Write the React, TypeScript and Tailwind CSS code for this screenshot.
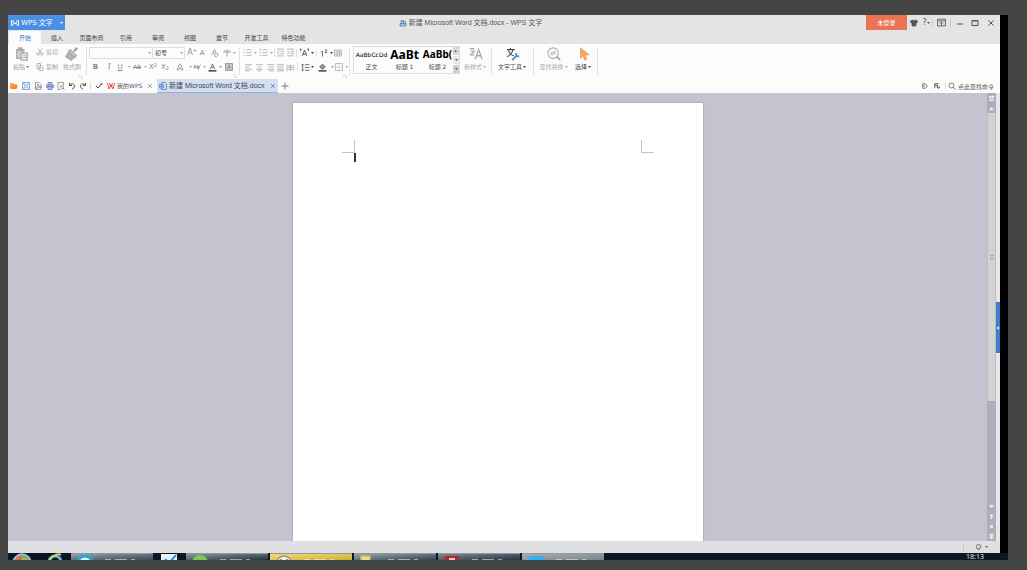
import type { ReactNode } from 'react';
import clsx from 'clsx';

const menus = ['插入', '页面布局', '引用', '审阅', '视图', '章节', '开发工具', '特色功能'];

interface IconProps {
  children: ReactNode;
  className?: string;
}

const Icon = ({ children, className = 'size-2' }: IconProps) => (
  <svg viewBox="0 0 16 16" className={clsx('shrink-0', className)} fill="none" stroke="currentColor" strokeWidth="1.5" aria-hidden="true">
    {children}
  </svg>
);

interface ToolProps {
  label: string;
  children: ReactNode;
  className?: string;
}

const Tool = ({ label, children, className = 'w-2.5' }: ToolProps) => (
  <button type="button" aria-label={label} className={clsx('flex h-2.5 shrink-0 items-center justify-center whitespace-nowrap', className)}>
    {children}
  </button>
);

const Caret = ({ className = 'w-1.5 text-[#aaa]' }: { className?: string }) => (
  <span className={clsx('flex shrink-0 justify-center', className)}>
    <svg viewBox="0 0 6 4" className="h-0.5 w-[3px]" aria-hidden="true">
      <path d="M0 0h6L3 4z" fill="currentColor" />
    </svg>
  </span>
);

const Rule = ({ className = 'h-2 bg-[#dcdcde]' }: { className?: string }) => <span className={clsx('w-px shrink-0', className)} />;

const GroupRule = () => <span className="mt-0.5 h-7 w-px shrink-0 bg-[#e2e2e4]" />;

const Corner = () => (
  <Icon className="size-1 self-end text-[#b5b5b5]">
    <path d="M2 2h8M2 2v8M6 6l8 8M14 7v7H7" />
  </Icon>
);

const Lines = ({ d }: { d: string }) => (
  <Icon className="size-[9px]">
    <path d={d} />
  </Icon>
);

/* Title bar */
const TitleBar = () => (
  <header className="flex h-[15px] shrink-0 bg-[#e4e4e6]">
    <button type="button" className="flex w-[57px] shrink-0 items-center bg-[#4a8fe2] pl-[3px] text-[7px] text-white">
      <Icon className="mr-0.5 h-2 w-2">
        <path d="M1 2v12l7-7 7 7V2M4 2v5l4 3 4-3V2" strokeWidth="1.8" />
      </Icon>
      <span className="flex-1 whitespace-nowrap text-left">WPS 文字</span>
      <Caret className="w-2 text-white" />
    </button>
    <h1 className="flex min-w-0 flex-1 items-center justify-center gap-0.5 pl-2.5 text-[#555]">
      <Icon className="size-2 text-[#5d7ba5]">
        <path d="M2 9h12v5H2zM4 9V3h5v6M9 5h4v4" fill="#a9bdd8" />
      </Icon>
      <span className="whitespace-nowrap font-['Liberation_Sans','Noto_Sans_CJK_SC',sans-serif] text-[7px]">新建 Microsoft Word 文档.docx - WPS 文字</span>
    </h1>
    <div className="flex w-[134px] shrink-0 items-center text-[#555]">
      <button type="button" className="h-full w-[41px] bg-[#ea7351] text-white">未登录</button>
      <Tool label="皮肤" className="w-3.5">
        <Icon><path d="M5 2L1 4l1 4 2-1v7h8V7l2 1 1-4-4-2-3 2z" fill="currentColor" /></Icon>
      </Tool>
      <Tool label="帮助" className="w-[11px]">
        <span className="text-[8px]">?</span>
        <Caret className="w-1" />
      </Tool>
      <Rule className="h-2 bg-[#c8c8ca]" />
      <Tool label="功能区" className="w-[17px]">
        <Icon className="size-[9px]"><path d="M1 2h14v12H1zM1 5h14M8 14V7M5 10l3-3 3 3" /></Icon>
      </Tool>
      <Rule className="h-2 bg-[#c8c8ca]" />
      <Tool label="最小化" className="w-[18px]">
        <Icon><path d="M2 10h12" strokeWidth="2" /></Icon>
      </Tool>
      <Tool label="最大化" className="w-3">
        <Icon><path d="M2 3h12v10H2zM2 4h12" strokeWidth="2" /></Icon>
      </Tool>
      <Tool label="关闭" className="w-[19px]">
        <Icon><path d="M3 3l10 10M13 3L3 13" strokeWidth="2" /></Icon>
      </Tool>
    </div>
  </header>
);

const MenuBar = () => (
  <nav className="flex h-3.5 shrink-0 bg-[#e4e4e6] pl-px pt-px text-[#444]">
    <button type="button" className="w-8 bg-[#fcfcfc] text-[#3b78c4]">开始</button>
    {menus.map((m) => (
      <button type="button" key={m} className={m.length > 2 ? 'w-[37px]' : 'w-8'}>{m}</button>
    ))}
  </nav>
);

const ClipboardGroup = () => (
  <div className="flex w-[78px] shrink-0 gap-1 pl-1 text-[#a5a5a5]">
    <button type="button" className="flex w-[19px] flex-col items-center gap-px pt-0.5">
      <Icon className="size-3.5 text-[#aaa]">
        <path d="M2 3h8v10H2z" fill="#d0d0d0" />
        <path d="M4 1h4v3H4z" fill="currentColor" />
        <path d="M7 7h7v8H7z" fill="#efefef" />
        <path d="M9 10h4M9 12h4" strokeWidth="1" />
      </Icon>
      <span className="flex h-2.5 items-center whitespace-nowrap">粘贴<Caret className="w-[5px] text-[#777]" /></span>
    </button>
    <div className="flex w-6 flex-col gap-[5px] pt-0.5">
      <Tool label="剪切" className="w-6 gap-0.5">
        <Icon><path d="M4 1l6 9M12 1L6 10" /><circle cx="4" cy="12" r="2.5" /><circle cx="12" cy="12" r="2.5" /></Icon>
        剪切
      </Tool>
      <Tool label="复制" className="w-6 gap-0.5">
        <Icon><path d="M2 1h7v10H2zM6 5h5l3 3v7H6z" fill="#fcfcfc" /></Icon>
        复制
      </Tool>
    </div>
    <button type="button" className="flex w-[18px] flex-col items-center gap-px pt-0.5 whitespace-nowrap">
      <Icon className="size-3.5 text-[#aaa]">
        <path d="M14 1l-4 4" strokeWidth="3" />
        <path d="M6 3l7 7-2 2-7-7z" fill="#ccc" />
        <path d="M4 6l6 6-3 3-6-4z" fill="#b5b5b5" />
      </Icon>
      <span className="flex h-2.5 items-center">格式刷</span>
    </button>
    <div className="-ml-1.5 flex"><Corner /></div>
  </div>
);

const FontGroup = () => (
  <div className="flex w-[152px] shrink-0 flex-col text-[#888]">
    <div className="flex h-[15px] items-center pl-0.5">
      <label className="flex h-3 w-16 items-center border border-[#dedee0]">
        <select aria-label="字体" className="h-full w-14 appearance-none outline-none" defaultValue=""><option value="" /></select>
        <Caret />
      </label>
      <label className="mr-0.5 flex h-3 w-8 items-center border border-l-0 border-[#dedee0] pl-0.5 text-[#444]">
        <select aria-label="字号" className="h-full w-[23px] appearance-none outline-none"><option>初号</option></select>
        <Caret />
      </label>
      <Tool label="增大字号"><span className="text-[8px]">A</span><sup className="text-[5px]">+</sup></Tool>
      <Tool label="减小字号" className="w-3"><span className="text-[7px]">A</span><sup className="text-[5px]">-</sup></Tool>
      <Tool label="清除格式" className="w-3"><Icon><path d="M2 12L7 1l3 7M4 8h4M7 12l4-4 4 3-4 4H8z" /></Icon></Tool>
      <Tool label="拼音指南" className="w-3"><Icon><path d="M2 4h12M8 1v3M5 7h6M8 7v8M2 4v4M14 4v4" /></Icon></Tool>
      <Caret className="w-[3px] text-[#aaa]" />
    </div>
    <div className="flex h-3.5 items-center">
      <Tool label="加粗" className="w-[17px]"><b className="text-[7px]">B</b></Tool>
      <Tool label="倾斜"><i className="font-serif text-[8px]">I</i></Tool>
      <Tool label="下划线" className="w-3"><u className="text-[7px]">U</u></Tool>
      <Caret />
      <Tool label="删除线"><s>AB</s></Tool>
      <Caret />
      <Tool label="上标"><span className="text-[7px]">X</span><sup className="text-[5px]">2</sup></Tool>
      <Tool label="下标" className="w-3.5"><span className="text-[7px]">X</span><sub className="text-[5px]">2</sub></Tool>
      <Tool label="文字效果" className="w-4"><Icon><path d="M2 14L7 2h2l5 12h-3l-1-3H6l-1 3zM7 8h2" /></Icon></Tool>
      <Caret className="w-1 text-[#aaa]" />
      <Tool label="突出显示" className="w-2.5"><Icon><path d="M1 11l3-7 3 7M2 9h4M9 4v7h3V7H9M10 13l5-10" /></Icon></Tool>
      <Caret className="w-1 text-[#aaa]" />
      <Tool label="字体颜色" className="w-3 text-[#555]"><Icon className="size-[9px]"><path d="M4 11L8 2l4 9M6 8h4" /><path d="M1 14h14" strokeWidth="3" /></Icon></Tool>
      <Caret className="w-1 text-[#999]" />
      <Tool label="字符底纹" className="w-3.5"><Icon><path d="M1 1h14v14H1z" fill="#ccc" /><path d="M4 13L8 3l4 10M6 9h4" /></Icon></Tool>
    </div>
    <div className="flex justify-end pr-0.5"><Corner /></div>
  </div>
);

const ParagraphGroup = () => (
  <div className="flex w-[109px] shrink-0 flex-col pl-0.5 text-[#aaa]">
    <div className="flex h-[15px] items-center">
      <Tool label="项目符号"><Lines d="M1 3h2M6 3h9M1 8h2M6 8h9M1 13h2M6 13h9" /></Tool>
      <Caret />
      <Tool label="编号"><Lines d="M2 1v4M6 3h9M1 8h3M6 8h9M1 13h3M6 13h9" /></Tool>
      <Caret />
      <Rule />
      <Tool label="减少缩进"><Lines d="M2 2h12M8 6h6M8 10h6M2 14h12M6 5L2 8l4 3" /></Tool>
      <Tool label="增加缩进"><Lines d="M2 2h12M8 6h6M8 10h6M2 14h12M2 5l4 3-4 3" /></Tool>
      <Rule className="mx-px h-2 bg-[#dcdcde]" />
      <Tool label="中文版式" className="w-3 text-[#444]"><Icon className="size-[9px]"><path d="M4 14L8 4l4 10M5 11h6M1 1v4M15 1v4M3 2l-2 1M13 2l2 1" /></Icon></Tool>
      <Caret className="w-1 text-[#444]" />
      <Rule className="mx-0.5 h-2 bg-[#dcdcde]" />
      <Tool label="排序" className="w-2.5 text-[#444]"><Icon><path d="M5 15V4M2 7l3-3M10 2h4l-4 5h4" /></Icon></Tool>
      <Caret className="w-1 text-[#444]" />
      <Tool label="显示段落标记"><Icon><path d="M1 2h14v12H1zM1 6h14M1 10h14M6 2v12M11 2v12" /></Icon></Tool>
    </div>
    <div className="flex h-3.5 items-center">
      <Tool label="左对齐" className="w-3"><Lines d="M2 3h12M2 7h8M2 11h12M2 14h8" /></Tool>
      <Tool label="居中" className="w-[11px]"><Lines d="M2 3h12M5 7h6M2 11h12M5 14h6" /></Tool>
      <Tool label="右对齐"><Lines d="M2 3h12M6 7h8M2 11h12M6 14h8" /></Tool>
      <Tool label="两端对齐"><Lines d="M2 3h12M2 7h12M2 11h12M2 14h12" /></Tool>
      <Tool label="分散对齐"><Lines d="M2 3v11M14 3v11M4 5h8M4 8h8M4 12h8M8 3v10" /></Tool>
      <Rule className="mx-0.5 h-2 bg-[#dcdcde]" />
      <Tool label="行距" className="w-2.5 text-[#555]"><Lines d="M3 2v12M1 4l2-2 2 2M1 12l2 2 2-2M7 3h8M7 8h8M7 13h8" /></Tool>
      <Caret className="w-1 text-[#444]" />
      <Tool label="底纹颜色" className="w-4 text-[#555]"><Icon className="size-[9px]"><path d="M8 2l5 5-5 4-5-4z" fill="#999" /><path d="M1 14h14" strokeWidth="3" /></Icon></Tool>
      <Caret className="w-1 text-[#999]" />
      <Tool label="边框" className="w-2.5"><Icon><path d="M1 1h14v14H1z" /><path d="M8 1v14M1 8h14" strokeDasharray="2 2" /></Icon></Tool>
      <Caret className="w-1 text-[#aaa]" />
    </div>
    <div className="flex justify-end pr-0.5"><Corner /></div>
  </div>
);

const styles = [
  { name: '正文', sample: 'AaBbCcDd', look: "text-[6px]" },
  { name: '标题 1', sample: 'AaBt', look: "font-['Noto_Sans',sans-serif] text-[12px] font-bold" },
  { name: '标题 2', sample: 'AaBb(', look: "font-['Noto_Sans',sans-serif] text-[10px] font-bold" },
];

const StyleGallery = () => (
  <div className="mt-px flex h-7 w-[107px] shrink-0 border border-[#dedee0]">
    <div className="flex flex-1 gap-0.5 pl-0.5">
      {styles.map((s) => (
        <button type="button" key={s.name} className="flex w-[31px] shrink-0 flex-col items-center">
          <span className={clsx('flex h-[15px] items-center leading-[15px] text-black', s.look)}>{s.sample}</span>
          <span className="flex h-2.5 items-center text-[#444]">{s.name}</span>
        </button>
      ))}
    </div>
    <div className="flex w-1.5 shrink-0 flex-col gap-px text-[#666]">
      <button type="button" aria-label="上一行" className="flex flex-1 items-center bg-[#d8d8da]"><Caret className="w-1.5 rotate-180" /></button>
      <button type="button" aria-label="下一行" className="flex flex-1 items-center bg-[#e6e6e8]"><Caret className="w-1.5" /></button>
      <button type="button" aria-label="更多样式" className="flex flex-1 items-center bg-[#cfcfd1]"><Caret className="w-1.5" /></button>
    </div>
  </div>
);

interface BigToolProps {
  label: string;
  className: string;
  children: ReactNode;
}

const BigTool = ({ label, className, children }: BigToolProps) => (
  <button type="button" className={clsx('flex shrink-0 flex-col items-center gap-px pt-0.5', className)}>
    {children}
    <span className="flex h-2.5 items-center whitespace-nowrap">{label}<Caret className="w-[5px]" /></span>
  </button>
);

const Ribbon = () => (
  <div className="flex h-[35px] shrink-0 overflow-hidden bg-[#fcfcfc] pt-px">
    <ClipboardGroup />
    <GroupRule />
    <FontGroup />
    <GroupRule />
    <ParagraphGroup />
    <GroupRule />
    <div className="ml-[3px] flex">
      <StyleGallery />
      <BigTool label="新样式" className="w-[31px] text-[#aaa]">
        <Icon className="size-3.5">
          <path d="M7 14l4-11 4 11M8 10h6M1 2h5M2 5h4l-4 4h4" />
        </Icon>
      </BigTool>
    </div>
    <GroupRule />
    <BigTool label="文字工具" className="w-[41px] text-[#444]">
      <Icon className="size-3.5">
        <path d="M1 3h9M5 1v2M8 3c-1 4-4 7-7 8M3 4c1 4 4 6 6 6" strokeWidth="1.2" />
        <path d="M7 15l6-6M11 7l1 3 3 1" stroke="#4d86c6" strokeWidth="2" />
      </Icon>
    </BigTool>
    <GroupRule />
    <BigTool label="查找替换" className="w-10 text-[#aaa]">
      <Icon className="size-3.5">
        <circle cx="7" cy="7" r="6" strokeWidth="1.2" />
        <path d="M11 11l4 4" strokeWidth="2" />
        <path d="M4 6h6L8 4M10 8H4l2 2" strokeWidth="1" />
      </Icon>
    </BigTool>
    <BigTool label="选择" className="mr-1 w-[19px] text-[#444]">
      <Icon className="size-3.5">
        <path d="M4 1v12l3-3 2 5 2-1-2-5h5z" fill="#f0a566" stroke="#eda063" strokeWidth="1" />
      </Icon>
    </BigTool>
    <GroupRule />
  </div>
);

/* Quick access buttons and open documents */
const TabStrip = () => (
  <div className="flex h-3.5 shrink-0 items-center bg-[#fcfcfc] text-[#555]">
    <Tool label="打开" className="w-3"><Icon><path d="M1 13V3h5l1 2h6v2" fill="#f3a64b" stroke="#ea8f32" /><path d="M1 14l3-7h12l-3 7z" fill="#f08c35" stroke="none" /></Icon></Tool>
    <Tool label="保存" className="w-3 text-[#5b93dd]"><Icon><path d="M1 1h14v14H1zM4 1v5h8V1M4 15v-5h8v5" /></Icon></Tool>
    <Tool label="输出为PDF" className="w-3 text-[#b0605f]"><Icon><path d="M3 1h7l4 4v10H3z" stroke="#888" /><path d="M1 12c6-2 7-5 7-8 0 4 3 6 7 6-5 0-9 2-11 4" /></Icon></Tool>
    <Tool label="打印" className="w-[11px] text-[#6476c4]"><Icon><path d="M4 6V1h8v5M4 11H1V6h14v5h-3M4 9h8v6H4z" fill="#b9c2ee" /></Icon></Tool>
    <Tool label="打印预览" className="w-[11px] text-[#7d8a7d]"><Icon><path d="M13 7V1H2v14h5" /><circle cx="10" cy="10" r="3" /><path d="M12 12l3 3" strokeWidth="2" /></Icon></Tool>
    <Tool label="撤销" className="w-3"><Icon><path d="M3 2v5h5M3 7c3-5 10-4 10 1 0 3-2 5-5 6" strokeWidth="2" /></Icon></Tool>
    <Tool label="恢复" className="w-2.5"><Icon><path d="M13 2v5H8M13 7C10 2 3 3 3 8c0 3 2 5 5 6" strokeWidth="2" /></Icon></Tool>
    <Rule className="mx-0.5 h-2 bg-[#dcdcde]" />
    <Tool label="切换" className="w-3 text-[#444]"><Icon><path d="M2 8l4 4 7-8" strokeWidth="2" /><circle cx="13" cy="4" r="2" fill="#d8413c" stroke="none" /></Icon></Tool>
    <button type="button" className="ml-0.5 flex h-full w-9 items-center gap-0.5 whitespace-nowrap">
      <Icon className="size-2 text-[#d94b45]"><path d="M1 2l3 12 4-8 4 8 3-12M5 2l3 8 3-8" strokeWidth="2" /></Icon>
      我的WPS
    </button>
    <Tool label="关闭我的WPS" className="w-3.5"><Icon className="size-1.5"><path d="M3 3l10 10M13 3L3 13" /></Icon></Tool>
    <div className="flex h-full w-[121px] shrink-0 items-center border-b border-[#8fb3e3] bg-[#d3e0f3] pl-0.5">
      <button type="button" className="flex flex-1 items-center gap-0.5 whitespace-nowrap font-['Liberation_Sans','Noto_Sans_CJK_SC',sans-serif] text-[7px] text-[#444]">
        <Icon className="size-2 text-[#4c7fc4]"><path d="M5 1h7l3 3v11H5z" /><path d="M1 5h8v7H1zM3 7v3l2-2 2 2V7" fill="#bcd2f0" /></Icon>
        新建 Microsoft Word 文档.docx
      </button>
      <Tool label="关闭文档"><Icon className="size-1.5 text-[#4f6f9f]"><path d="M3 3l10 10M13 3L3 13" strokeWidth="2" /></Icon></Tool>
    </div>
    <Tool label="新建标签" className="w-3.5"><Icon><path d="M8 1v14M1 8h14" /></Icon></Tool>
    <div className="ml-auto flex items-center pr-[5px]">
      <Tool label="文档漫游" className="w-3"><Icon className="size-1.5"><path d="M2 2h7l5 6-5 6H2zM2 8h6" strokeWidth="2" /></Icon></Tool>
      <Tool label="切换窗口" className="w-3"><Icon className="size-1.5"><path d="M2 14V2h10M2 6h7v5M8 11h7l-3 4z" strokeWidth="2.5" /></Icon></Tool>
      <Rule className="mx-0.5 h-2 bg-[#dcdcde]" />
      <label className="flex items-center gap-0.5">
        <Icon><circle cx="7" cy="7" r="5" /><path d="M11 11l4 4" /></Icon>
        <input type="text" placeholder="点此查找命令" aria-label="点此查找命令" className="h-2.5 w-[37px] outline-none placeholder:text-[#555]" />
      </label>
    </div>
  </div>
);

const ScrollButton = ({ label, d }: { label: string; d: string }) => (
  <button type="button" aria-label={label} className="flex h-2.5 w-full items-center justify-center text-[#f0f0f2]">
    <Icon className="size-[7px]"><path d={d} fill="currentColor" /></Icon>
  </button>
);

const Workspace = () => (
  <main className="flex min-h-0 flex-1 bg-[#c4c3cf]">
    <div className="min-w-0 flex-1 overflow-hidden pt-2.5">
      <article className="mx-auto h-full w-[410px] bg-white pt-[37px] shadow-[0_0_2px_#8e8e98]">
        <div className="flex justify-between px-[49px]">
          <span className="size-[13px] border-r border-b border-[#c4c4c4]" />
          <span className="size-[13px] border-b border-l border-[#c4c4c4]" />
        </div>
        <div className="ml-[61px] h-[9px] w-0.5 bg-[#333]" />
      </article>
    </div>
    <aside className="flex w-[9px] shrink-0 flex-col bg-[#aeadb8]">
      <ScrollButton label="标尺" d="M3 3h4v4H3zM9 2h4v5H9zM4 10h8v3H4z" />
      <ScrollButton label="向上滚动" d="M8 5l5 6H3z" />
      <div className="flex-[289] border-x border-[#bcbcc2] bg-[#d2d2d5]">
        <div className="flex h-full flex-col items-center justify-center gap-px">
          <span className="h-px w-1 bg-[#aaa]" />
          <span className="h-px w-1 bg-[#aaa]" />
          <span className="h-px w-1 bg-[#aaa]" />
        </div>
      </div>
      <div className="flex-[100]" />
      <ScrollButton label="向下滚动" d="M3 5h10l-5 6z" />
      <ScrollButton label="上一页" d="M8 2l4 4H9v7H7V6H4z" />
      <ScrollButton label="选择浏览对象" d="M8 5a3 3 0 100 6 3 3 0 000-6z" />
      <ScrollButton label="下一页" d="M3 3h10L8 8zM3 9h10l-5 5z" />
    </aside>
    <div className="flex w-1 shrink-0 flex-col bg-[#e6e6e8]">
      <div className="flex-[209]" />
      <button type="button" aria-label="展开任务窗格" className="flex h-[51px] items-center bg-[#3b80c6] text-white">
        <Icon className="size-1"><path d="M11 2L4 8l7 6z" fill="currentColor" /></Icon>
      </button>
      <div className="flex-[188]" />
    </div>
  </main>
);

const StatusBar = () => (
  <footer className="flex h-3 shrink-0 items-center justify-end bg-[#e0e0e2] pr-3 text-[#666]">
    <Rule className="mr-2 h-2 bg-[#c4c4c6]" />
    <Tool label="显示选项" className="w-3"><Icon className="size-[7px]"><circle cx="8" cy="6" r="5" strokeWidth="2" /><path d="M6 13h4" strokeWidth="2" /></Icon></Tool>
    <Caret className="w-1 text-[#666]" />
  </footer>
);

interface TaskProps {
  label: string;
  tone: string;
  icon: ReactNode;
}

const tasks: TaskProps[] = [
  {
    label: '绿色浏览器',
    tone: 'from-[#8b979f] to-[#26343f]',
    icon: <><circle cx="8" cy="8" r="8" fill="#7fc850" stroke="none" /><path d="M5 9a3 3 0 016 0" stroke="#fff" strokeWidth="2" /></>,
  },
  {
    label: '消息',
    tone: 'from-[#f1dc7a] to-[#cdb02f]',
    icon: <><circle cx="8" cy="8" r="7" fill="#f3f0e2" stroke="#998" /><circle cx="5" cy="5" r="1" fill="#777" stroke="none" /><circle cx="11" cy="5" r="1" fill="#777" stroke="none" /></>,
  },
  {
    label: '文件夹',
    tone: 'from-[#9aa5ac] to-[#34434f]',
    icon: <path d="M1 1h9v15H1z" fill="#f1dc8d" stroke="#d0b660" />,
  },
  {
    label: '文档',
    tone: 'from-[#7d8890] to-[#263645]',
    icon: <><path d="M1 1h14v15H1z" fill="#b62532" stroke="none" /><path d="M5 4h6M5 6h6" stroke="#fff" /></>,
  },
  {
    label: '网盘',
    tone: 'from-[#a9adb1] to-[#7b838a]',
    icon: <path d="M0 16V5a4 4 0 014-4h8a4 4 0 014 4v11z" fill="#35aef5" stroke="none" />,
  },
];

const Task = ({ label, tone, icon }: TaskProps) => (
  <button type="button" aria-label={label} className={clsx('flex h-full w-[82px] shrink-0 gap-3 overflow-hidden border-t border-[#8d98a0] bg-linear-to-br pt-px pl-1.5', tone)}>
    <Icon className="size-4">{icon}</Icon>
    <span className="mt-1 flex gap-1 opacity-50">
      <span className="h-px w-1.5 bg-white" />
      <span className="h-px w-3 bg-white" />
      <span className="h-px w-1 bg-white" />
    </span>
  </button>
);

const Taskbar = () => (
  <div className="flex h-[7px] shrink-0 items-start gap-0.5 overflow-hidden bg-[#0b1824]">
    <button type="button" aria-label="开始菜单" className="ml-1 w-5">
      <Icon className="size-5">
        <circle cx="8" cy="8" r="7" fill="#7d99a9" stroke="#a9bcc8" />
        <path d="M3 6c1-3 3-4 5-3v6H3z" fill="#e8663c" stroke="none" />
        <path d="M8 3c2 1 4 1 5 2v4H8z" fill="#8fc04a" stroke="none" />
      </Icon>
    </button>
    <button type="button" aria-label="浏览器" className="mr-0.5 ml-3 w-[21px]">
      <Icon className="size-4"><circle cx="9" cy="9" r="6" stroke="#6fb1dc" strokeWidth="3" /><path d="M3 8c3-5 9-8 12-6" stroke="#d7cf52" strokeWidth="2" /></Icon>
    </button>
    <Task label="远程助手" tone="from-[#98a2a9] to-[#3a4955]" icon={<><circle cx="8" cy="8" r="7" fill="#e8f6fd" stroke="#2ba5de" strokeWidth="3" /><path d="M5 5v2M11 5v2" stroke="#247cac" /></>} />
    <button type="button" aria-label="画图" className="w-[29px] pl-1.5">
      <Icon className="size-4"><path d="M0 1h16v15H0z" fill="#e6f2fa" stroke="none" /><path d="M4 6l4 4 7-8" stroke="#3f8fc5" strokeWidth="2" /></Icon>
    </button>
    {tasks.map((t) => (
      <Task key={t.label} {...t} />
    ))}
    <time className="mt-px mr-6 ml-auto font-['Noto_Sans',sans-serif] text-[7px] leading-[6px] text-[#e2e6ea]">18:13</time>
  </div>
);

export default function App() {
  return (
    <div className="flex h-screen flex-col overflow-hidden bg-[#454545] pt-[15px] pr-[19px] pb-2.5 pl-2 font-['DejaVu_Sans','Noto_Sans_CJK_SC',sans-serif] text-[6px] leading-[8px]">
      <div className="flex min-h-0 flex-1 flex-col bg-black">
        <div className="flex min-h-0 flex-1 pr-2">
          <div className="flex min-w-0 flex-1 flex-col">
            <TitleBar />
            <MenuBar />
            <Ribbon />
            <TabStrip />
            <Workspace />
            <StatusBar />
          </div>
        </div>
        <Taskbar />
      </div>
    </div>
  );
}
